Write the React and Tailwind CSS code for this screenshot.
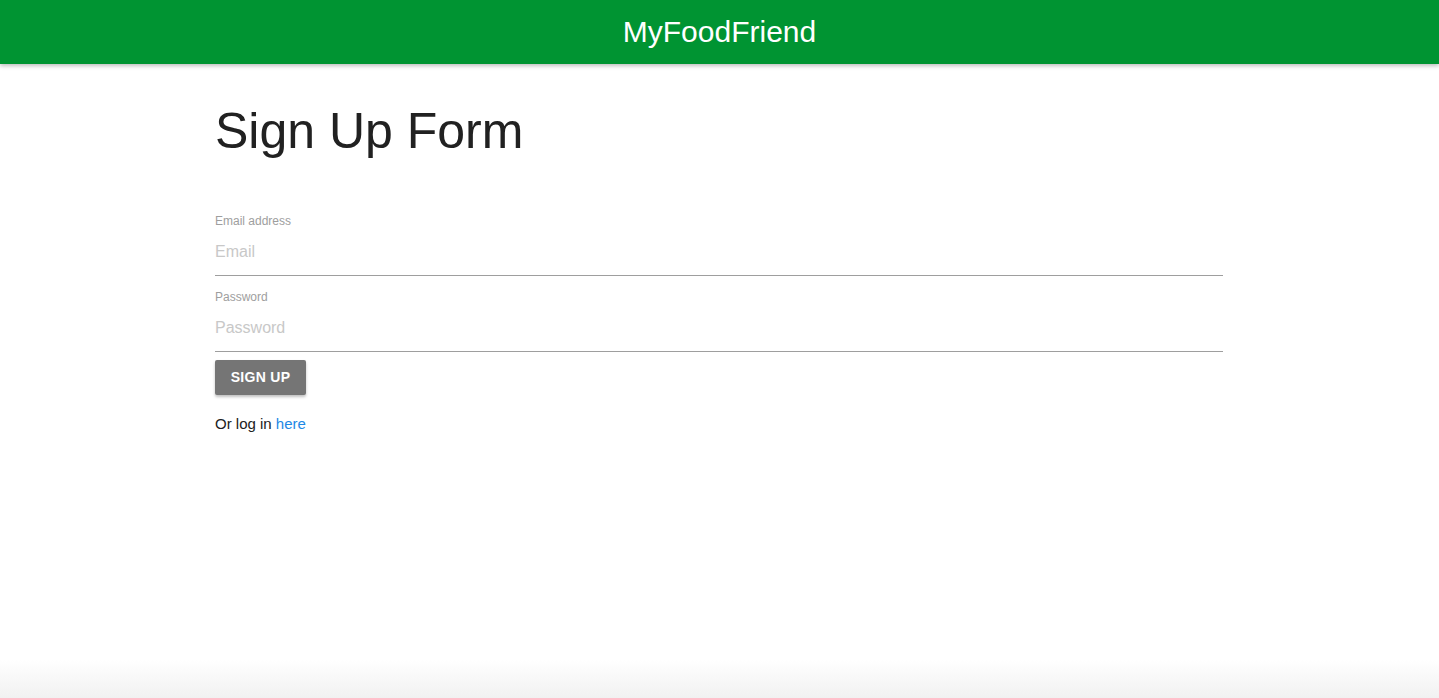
export default function App() {
  return (
    <div className="relative flex min-h-[698px] flex-col bg-white font-['Liberation_Sans',Arial,sans-serif]">
      <header className="flex h-16 items-center justify-center bg-[#009432] shadow-[0_2px_4px_rgba(0,0,0,0.25)]">
        <span className="text-[30px] leading-none text-white">MyFoodFriend</span>
      </header>
      <main className="ml-[215px] w-[1008px] flex-1">
        <h1 className="mt-[40px] text-[50px] leading-[55px] text-[#212121]">Sign Up Form</h1>
        <form className="mt-[54px] flex flex-col">
          <label className="text-[12px] leading-4 text-[#9e9e9e]">Email address</label>
          <input
            type="email"
            placeholder="Email"
            className="h-[47px] border-b border-[#9e9e9e] bg-transparent text-[16px] text-[#212121] outline-none placeholder:text-[#c8c8c8]"
          />
          <label className="mt-[13px] text-[12px] leading-4 text-[#9e9e9e]">Password</label>
          <input
            type="password"
            placeholder="Password"
            className="h-[47px] border-b border-[#9e9e9e] bg-transparent text-[16px] text-[#212121] outline-none placeholder:text-[#c8c8c8]"
          />
          <div className="mt-2">
            <button
              type="button"
              className="h-[35px] w-[91px] rounded-[2px] bg-[#757575] text-[14px] font-semibold tracking-[0.3px] text-white shadow-[0_2px_3px_rgba(0,0,0,0.25)]"
            >
              SIGN UP
            </button>
          </div>
          <p className="mt-[19px] text-[15px] leading-5 text-[#212121]">
            Or log in <a className="text-[#1e88e5]">here</a>
          </p>
        </form>
      </main>
      <div className="h-[38px] bg-gradient-to-b from-white to-[#f1f1f1]" />
    </div>
  );
}
